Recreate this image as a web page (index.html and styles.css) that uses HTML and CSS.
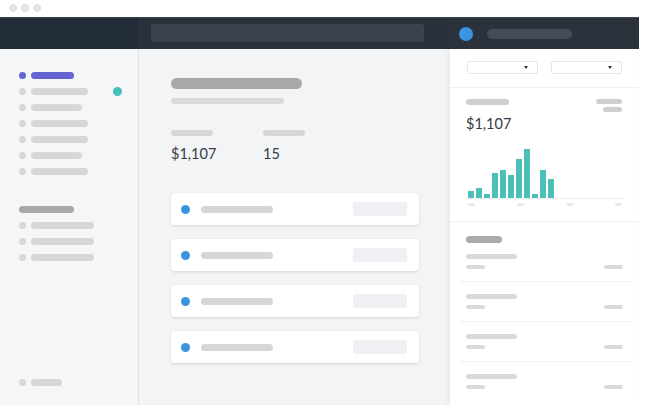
FILE: index.html
```html
<!DOCTYPE html>
<html>
<head>
<meta charset="utf-8">
<link rel="stylesheet" href="styles.css">
</head>
<body>
<div class="titlebar">
  <span class="tdot"></span><span class="tdot"></span><span class="tdot"></span>
</div>
<div class="app">
  <div class="topbar">
    <div class="tb-left"></div>
    <div class="tb-mid"><div class="search"></div></div>
    <div class="tb-right"><span class="avatar"></span><span class="tb-pill"></span></div>
  </div>
  <div class="main">
    <aside class="sidebar">
      <div class="nav">
        <div class="item active"><span class="dot"></span><span class="bar w43"></span></div>
        <div class="item"><span class="dot"></span><span class="bar w57"></span><span class="badge"></span></div>
        <div class="item"><span class="dot"></span><span class="bar w51"></span></div>
        <div class="item"><span class="dot"></span><span class="bar w57"></span></div>
        <div class="item"><span class="dot"></span><span class="bar w57"></span></div>
        <div class="item"><span class="dot"></span><span class="bar w51"></span></div>
        <div class="item"><span class="dot"></span><span class="bar w57"></span></div>
      </div>
      <div class="nav nav-group">
        <div class="item"><span class="group-title"></span></div>
        <div class="item"><span class="dot"></span><span class="bar w63"></span></div>
        <div class="item"><span class="dot"></span><span class="bar w63"></span></div>
        <div class="item"><span class="dot"></span><span class="bar w63"></span></div>
      </div>
      <div class="nav nav-bottom">
        <div class="item"><span class="dot"></span><span class="bar w31"></span></div>
      </div>
    </aside>
    <section class="content">
      <div class="title"></div>
      <div class="subtitle"></div>
      <div class="stats">
        <div class="stat"><div class="stat-label"></div><div class="stat-value">$1,107</div></div>
        <div class="stat"><div class="stat-label"></div><div class="stat-value">15</div></div>
      </div>
      <div class="cards">
        <div class="card"><span class="cdot"></span><span class="cbar"></span><span class="cbox"></span></div>
        <div class="card"><span class="cdot"></span><span class="cbar"></span><span class="cbox"></span></div>
        <div class="card"><span class="cdot"></span><span class="cbar"></span><span class="cbox"></span></div>
        <div class="card"><span class="cdot"></span><span class="cbar"></span><span class="cbox"></span></div>
      </div>
    </section>
    <aside class="panel">
      <div class="filters">
        <div class="select"><span class="caret"></span></div>
        <div class="select"><span class="caret"></span></div>
      </div>
      <div class="chart-card">
        <div class="chart-head">
          <span class="ch-label"></span>
          <div class="ch-right"><span class="chr1"></span><span class="chr2"></span></div>
        </div>
        <div class="chart-value">$1,107</div>
        <div class="chart">
          <span class="col" style="height:7px"></span>
          <span class="col" style="height:10px"></span>
          <span class="col" style="height:4px"></span>
          <span class="col" style="height:25px"></span>
          <span class="col" style="height:28px"></span>
          <span class="col" style="height:23px"></span>
          <span class="col" style="height:39px"></span>
          <span class="col" style="height:49px"></span>
          <span class="col" style="height:4px"></span>
          <span class="col" style="height:28px"></span>
          <span class="col" style="height:19px"></span>
        </div>
        <div class="axis"><span></span><span></span><span></span><span></span></div>
      </div>
      <div class="list">
        <div class="list-title"></div>
        <div class="row"><span class="r-line"></span><div class="r-sub"><span></span><span></span></div></div>
        <div class="row"><span class="r-line"></span><div class="r-sub"><span></span><span></span></div></div>
        <div class="row"><span class="r-line"></span><div class="r-sub"><span></span><span></span></div></div>
        <div class="row"><span class="r-line"></span><div class="r-sub"><span></span><span></span></div></div>
      </div>
    </aside>
  </div>
</div>
</body>
</html>
```
FILE: styles.css
```css
* { box-sizing: border-box; }
html, body { margin: 0; padding: 0; }
body {
  width: 650px;
  height: 405px;
  overflow: hidden;
  background: #ffffff;
  font-family: Lato, "Liberation Sans", sans-serif;
}
.titlebar {
  height: 17px;
  display: flex;
  align-items: center;
  gap: 4px;
  padding-left: 9px;
  padding-bottom: 1px;
}
.tdot {
  width: 8px;
  height: 8px;
  border-radius: 50%;
  background: #e6e6e6;
  border: 1px solid #dcdcdc;
}
.app {
  width: 639px;
  height: 388px;
  display: flex;
  flex-direction: column;
}
.topbar {
  height: 32px;
  display: flex;
  border-top: 1px solid #3b434e;
}
.tb-left { width: 138px; background: #232c39; }
.tb-mid {
  flex: 1;
  background: #2a313b;
  padding: 6px 26px 0 13px;
}
.search {
  height: 18px;
  border-radius: 3px;
  background: #3b424c;
}
.tb-right {
  width: 189px;
  background: #2b323c;
  display: flex;
  align-items: center;
  padding-left: 9px;
  gap: 14px;
}
.avatar {
  width: 14px;
  height: 14px;
  border-radius: 50%;
  background: #3b94e0;
}
.tb-pill {
  width: 85px;
  height: 10px;
  border-radius: 5px;
  background: #454c57;
}
.main {
  flex: 1;
  display: flex;
  min-height: 0;
}
.sidebar {
  width: 139px;
  background: #f5f6f8;
  border-right: 1px solid #dfe0e3;
  display: flex;
  flex-direction: column;
  padding: 18px 0 15px;
}
.nav { display: flex; flex-direction: column; }
.nav-group { margin-top: 22px; }
.nav-bottom { margin-top: auto; }
.item {
  height: 16px;
  display: flex;
  align-items: center;
  padding: 0 16px 0 19px;
}
.dot {
  width: 7px;
  height: 7px;
  border-radius: 50%;
  background: #d7d7d9;
  margin-right: 5px;
}
.bar {
  height: 7px;
  border-radius: 4px;
  background: #d7d7d9;
}
.item.active .dot, .item.active .bar { background: #6364d1; }
.w31 { width: 31px; }
.w43 { width: 43px; }
.w51 { width: 51px; }
.w57 { width: 57px; }
.w63 { width: 63px; }
.badge {
  margin-left: auto;
  width: 9px;
  height: 9px;
  border-radius: 50%;
  background: #45c1b9;
}
.group-title {
  width: 55px;
  height: 7px;
  border-radius: 4px;
  background: #a9a8a6;
}
.content {
  width: 311px;
  background: #f3f4f6;
  padding: 29px 0 0 32px;
}
.title {
  width: 131px;
  height: 11px;
  border-radius: 6px;
  background: #a8a8a8;
}
.subtitle {
  width: 113px;
  height: 6px;
  border-radius: 3px;
  background: #d9d9db;
  margin-top: 9px;
}
.stats {
  display: flex;
  margin-top: 26px;
}
.stat { width: 92px; }
.stat-label {
  width: 42px;
  height: 6px;
  border-radius: 3px;
  background: #d6d6d8;
}
.stat-value {
  margin-top: 9px;
  font-size: 14.5px;
  line-height: 18px;
  color: #363b43;
}
.cards {
  margin-top: 30px;
  display: flex;
  flex-direction: column;
  gap: 14px;
  width: 248px;
}
.card {
  height: 32px;
  background: #ffffff;
  border-radius: 4px;
  box-shadow: 0 1px 3px rgba(0, 0, 0, 0.13);
  display: flex;
  align-items: center;
  padding: 0 12px 0 10px;
}
.cdot {
  width: 9px;
  height: 9px;
  border-radius: 50%;
  background: #3b94e0;
}
.cbar {
  width: 72px;
  height: 7px;
  border-radius: 4px;
  background: #d6d6d8;
  margin-left: 11px;
}
.cbox {
  margin-left: auto;
  width: 54px;
  height: 14px;
  border-radius: 2px;
  background: #eff0f3;
}
.panel {
  width: 189px;
  background: #ffffff;
  box-shadow: -2px 0 6px rgba(0, 0, 0, 0.05);
  position: relative;
  display: flex;
  flex-direction: column;
}
.filters {
  display: flex;
  gap: 13px;
  padding: 12px 17px 13px 17px;
  border-bottom: 1px solid #efefef;
}
.select {
  width: 71px;
  height: 13px;
  border: 1px solid #e6e7e9;
  border-radius: 2px;
  display: flex;
  align-items: center;
  justify-content: flex-end;
  padding-right: 9px;
}
.caret {
  width: 0;
  height: 0;
  border-left: 2.5px solid transparent;
  border-right: 2.5px solid transparent;
  border-top: 3px solid #333;
}
.chart-card {
  padding: 11px 17px 15px 16px;
  border-bottom: 1px solid #efefef;
}
.chart-head {
  display: flex;
  justify-content: space-between;
  height: 13px;
}
.ch-label {
  width: 43px;
  height: 6px;
  border-radius: 3px;
  background: #cfcfcf;
}
.ch-right {
  display: flex;
  flex-direction: column;
  align-items: flex-end;
  gap: 3px;
}
.chr1 { width: 26px; height: 5px; border-radius: 3px; background: #cfcfcf; }
.chr2 { width: 19px; height: 5px; border-radius: 3px; background: #cfcfcf; }
.chart-value {
  margin-top: 3px;
  font-size: 14.5px;
  line-height: 18px;
  color: #363b43;
}
.chart {
  height: 66px;
  display: flex;
  align-items: flex-end;
  gap: 2.5px;
  padding-left: 2px;
  border-bottom: 1px solid #ededed;
  margin-right: -2px;
}
.col {
  width: 5.5px;
  background: #4dbfb9;
}
.axis {
  display: flex;
  justify-content: space-between;
  padding: 0 0 0 2px;
  margin-top: 4px;
}
.axis span {
  width: 7px;
  height: 3px;
  border-radius: 2px;
  background: #e9e9e9;
}
.list {
  padding: 14px 0 0;
  display: flex;
  flex-direction: column;
}
.list-title {
  margin-left: 16px;
  width: 36px;
  height: 7px;
  border-radius: 4px;
  background: #ababab;
}
.row {
  margin: 0 9px 0 10px;
  padding: 11px 7px 12px 6px;
  border-bottom: 1px solid #f1f1f1;
  display: flex;
  flex-direction: column;
  gap: 6px;
}
.row + .row { padding-top: 12px; }
.row:last-child { border-bottom: none; }
.r-line {
  width: 51px;
  height: 5px;
  border-radius: 3px;
  background: #d9d9d9;
}
.r-sub {
  display: flex;
  justify-content: space-between;
}
.r-sub span {
  width: 19px;
  height: 4px;
  border-radius: 2px;
  background: #d9d9d9;
}
```
